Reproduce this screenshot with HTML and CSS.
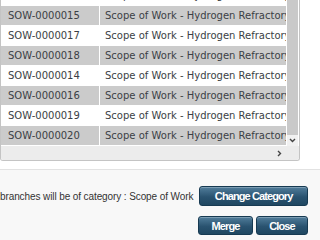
FILE: index.html
```html
<!DOCTYPE html>
<html lang="en">
<head>
  <meta charset="UTF-8">
  <meta name="viewport" content="width=device-width, initial-scale=1.0">
  <title>Merge Branches</title>
  <link rel="stylesheet" href="styles.css">
</head>
<body>
  <div class="grid-box">
    <div class="rows">
      <div class="row"><div class="cell id">SOW-0000013</div><div class="cell name">Scope of Work - Hydrogen Refractory</div></div>
      <div class="row alt"><div class="cell id">SOW-0000015</div><div class="cell name">Scope of Work - Hydrogen Refractory</div></div>
      <div class="row"><div class="cell id">SOW-0000017</div><div class="cell name">Scope of Work - Hydrogen Refractory</div></div>
      <div class="row alt"><div class="cell id">SOW-0000018</div><div class="cell name">Scope of Work - Hydrogen Refractory</div></div>
      <div class="row"><div class="cell id">SOW-0000014</div><div class="cell name">Scope of Work - Hydrogen Refractory</div></div>
      <div class="row alt"><div class="cell id">SOW-0000016</div><div class="cell name">Scope of Work - Hydrogen Refractory</div></div>
      <div class="row"><div class="cell id">SOW-0000019</div><div class="cell name">Scope of Work - Hydrogen Refractory</div></div>
      <div class="row alt"><div class="cell id">SOW-0000020</div><div class="cell name">Scope of Work - Hydrogen Refractory</div></div>
    </div>
    <div class="vscroll">
      <div class="track"></div>
      <div class="arrow down">
        <svg width="7" height="5" viewBox="0 0 7 5"><path d="M1 1 L3.5 3.5 L6 1" fill="none" stroke="#444" stroke-width="1.4"/></svg>
      </div>
    </div>
    <div class="hscroll">
      <div class="arrow right">
        <svg width="5" height="7" viewBox="0 0 5 7"><path d="M1 1 L3.5 3.5 L1 6" fill="none" stroke="#444" stroke-width="1.4"/></svg>
      </div>
    </div>
    <div class="corner"></div>
  </div>

  <div class="footer">
    <div class="footer-row">
      <span class="note">branches will be of category : Scope of Work</span>
      <button class="btn wide">Change Category</button>
    </div>
    <div class="footer-row">
      <button class="btn merge">Merge</button>
      <button class="btn close">Close</button>
    </div>
  </div>
</body>
</html>
```

FILE: styles.css
```css
body{
  margin: 0;
  width: 320px;
  height: 240px;
  overflow: hidden;
  background-color: #fff;
  font-family: "DejaVu Sans", Verdana, sans-serif;
  display: flex;
  flex-direction: column;
}
.grid-box{
  display: grid;
  grid-template-columns: 285px 13px;
  grid-template-rows: 146px 14px;
  grid-template-areas:
    "rows vscroll"
    "hscroll corner";
  width: 298px;
  border: 1px solid #c4c4c4;
  border-top: none;
  border-radius: 0 0 3px 3px;
  overflow: hidden;
  background-color: #fff;
}
.rows{
  grid-area: rows;
  overflow: hidden;
}
.row{
  display: flex;
  height: 19px;
  margin-top: 1px;
  background-color: #fff;
  color: #3b3f45;
  font-size: 10px;
  line-height: 19px;
  white-space: nowrap;
}
.row:first-child{
  margin-top: -14px;
}
.row.alt{
  background-color: #cbcbcb;
}
.cell{
  overflow: hidden;
}
.cell.id{
  width: 91px;
  padding-left: 6px;
  margin-left: 1px;
  border-right: 1px solid #fff;
}
.cell.name{
  flex: 1;
  padding-left: 5px;
}
.vscroll{
  grid-area: vscroll;
  display: flex;
  flex-direction: column;
  padding: 0 1px;
}
.vscroll .track{
  flex: 1;
  background-color: #c9c9c9;
}
.arrow{
  display: flex;
  align-items: center;
  justify-content: center;
}
.arrow.down{
  height: 11px;
  background-color: #f1f1f1;
}
.hscroll{
  grid-area: hscroll;
  display: flex;
  justify-content: flex-end;
  background-color: #ececec;
}
.arrow.right{
  width: 12px;
  margin-right: 1px;
}
.corner{
  grid-area: corner;
  background-color: #ececec;
}
.footer{
  flex: 1;
  margin-top: 8px;
  border-top: 1px solid #e2e2e2;
  background-color: #f8f8f8;
  padding: 16px 12px 0 0;
  display: flex;
  flex-direction: column;
  gap: 10px;
}
.footer-row{
  display: flex;
  justify-content: flex-end;
  align-items: center;
  gap: 3px;
}
.note{
  font-family: "Liberation Sans", Arial, sans-serif;
  font-size: 10px;
  letter-spacing: -0.1px;
  color: #333;
  white-space: nowrap;
  margin-right: 3px;
}
.btn{
  height: 20px;
  padding: 0;
  border: 1px solid #173a52;
  border-radius: 3px;
  background: linear-gradient(#517d9b, #2a5370 55%, #1f4761);
  box-shadow: inset 0 1px 0 rgba(255,255,255,.25);
  color: #fff;
  font-family: "Liberation Sans", Arial, sans-serif;
  font-size: 11px;
  font-weight: bold;
  letter-spacing: -0.9px;
  cursor: pointer;
}
.btn.wide{
  width: 109px;
}
.btn.merge{
  width: 55px;
  height: 19px;
}
.btn.close{
  width: 52px;
  height: 19px;
}
```
